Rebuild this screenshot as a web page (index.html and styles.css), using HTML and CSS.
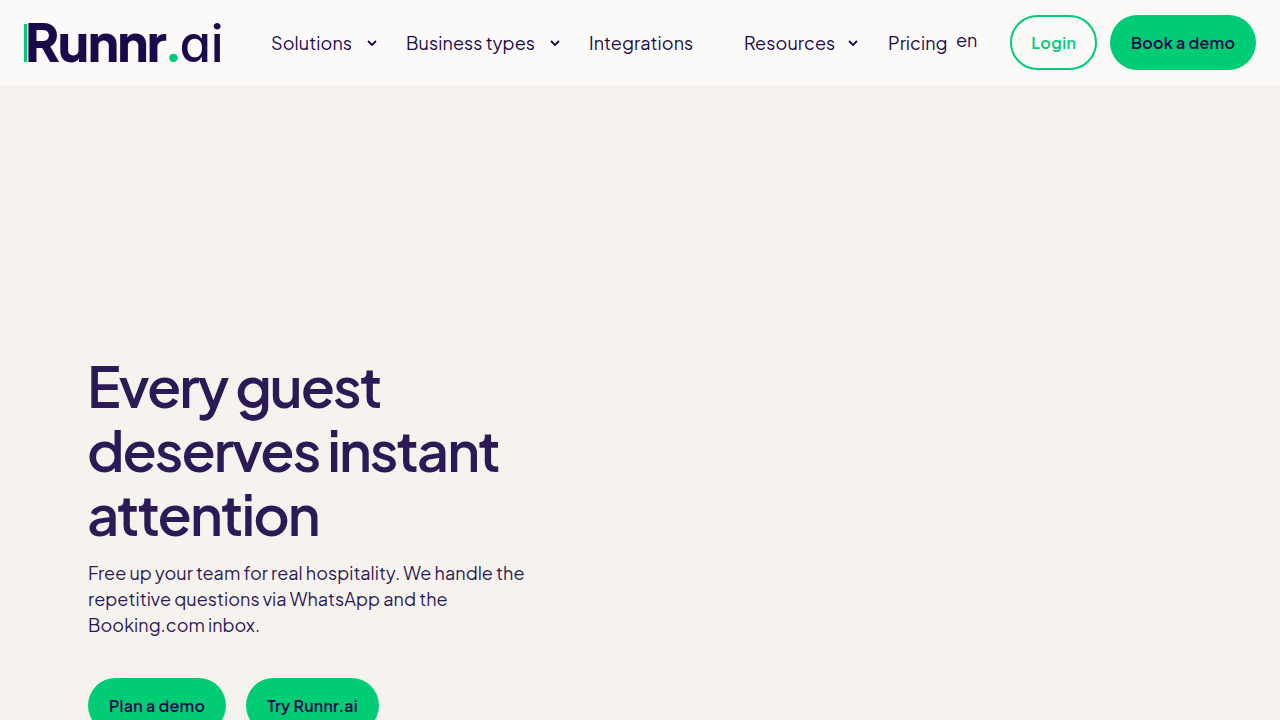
FILE: index.html
```html
<!DOCTYPE html>
<html lang="en">
<head>
<meta charset="utf-8">
<title>Runnr.ai</title>
<link rel="stylesheet" href="styles.css">
</head>
<body>
<header class="nav">
  <a class="logo"><span class="logo-r">Runnr</span><span class="logo-dot">.</span><span class="logo-ai">ai</span></a>
  <nav class="menu">
    <a class="item sol">Solutions<svg class="chev" viewBox="0 0 10 6"><path d="M1 1l4 4 4-4"/></svg></a>
    <a class="item biz">Business types<svg class="chev" viewBox="0 0 10 6"><path d="M1 1l4 4 4-4"/></svg></a>
    <a class="item int">Integrations</a>
    <a class="item res">Resources<svg class="chev" viewBox="0 0 10 6"><path d="M1 1l4 4 4-4"/></svg></a>
    <a class="item pri">Pricing</a>
  </nav>
  <span class="lang">en</span>
  <a class="btn login">Login</a>
  <a class="btn demo">Book a demo</a>
</header>
<main class="hero">
  <div class="copy">
    <h1>Every guest deserves instant attention</h1>
    <p>Free up your team for real hospitality. We handle the repetitive questions via WhatsApp and the Booking.com inbox.</p>
    <div class="actions">
      <a class="btn cta">Plan a demo</a>
      <a class="btn cta">Try Runnr.ai</a>
    </div>
  </div>
</main>
</body>
</html>
```
FILE: styles.css
```css
* { box-sizing: border-box; }
html, body { margin: 0; height: 720px; overflow: hidden; }
body { background: #f5f2ed; font-family: "Plus Jakarta Sans", Inter, "Liberation Sans", sans-serif; color: #1b0a4b; }
.nav { height: 85px; background: #fbfaf8; display: flex; align-items: center; padding: 0 24px; }
.logo { width: 199px; height: 38px; display: flex; align-items: baseline; font-size: 52px; line-height: 34px; font-weight: 800; letter-spacing: -1.6px; color: #1b0a4b; }
.logo-r { border-left: 3px solid #00cc76; height: 38px; text-indent: -2px; }
.logo-dot { color: #00cc76; font-family: Lato, sans-serif; font-weight: 900; margin-left: 2px; letter-spacing: 0; }
.logo-ai { font-family: Inter, sans-serif; font-size: 51px; font-weight: 500; font-feature-settings: "cv11" 1; letter-spacing: -0.3px; }
.menu { display: flex; margin-left: 48px; font-size: 18px; letter-spacing: 0.1px; }
.item { display: flex; align-items: center; }
.sol { width: 135px; }
.biz { width: 183px; }
.int { width: 155px; }
.res { width: 144px; }
.pri { width: 68px; }
.chev { width: 10px; height: 6px; margin-left: 15px; fill: none; stroke: #1b0a4b; stroke-width: 1.8; }
.res .chev { margin-left: 13px; }
.lang { font-size: 18px; margin-top: -7px; }
.btn { display: inline-flex; align-items: center; justify-content: center; border-radius: 28px; font-size: 16px; font-weight: 600; letter-spacing: 0.25px; }
.login { width: 87px; height: 55px; margin-left: 33px; border: 2px solid #00cc76; color: #00cc76; letter-spacing: 0.5px; }
.demo { width: 146px; height: 55px; margin-left: 13px; background: #00cc76; }
.hero { padding: 86px 88px 0; }
.copy { width: 442px; height: 600px; background: #f6f3ee; display: flex; flex-direction: column; padding-top: 182px; }
h1 { margin: 0 0 0 -1px; font-size: 56px; line-height: 64px; font-weight: 600; letter-spacing: -2px; color: #2c1a56; }
p { margin: 15px 0 0; font-size: 18px; line-height: 26px; letter-spacing: 0.05px; color: #2c1a56; }
.actions { display: flex; gap: 20px; margin-top: 40px; }
.cta { height: 55px; padding: 0 21px; background: #00cc76; }
```
